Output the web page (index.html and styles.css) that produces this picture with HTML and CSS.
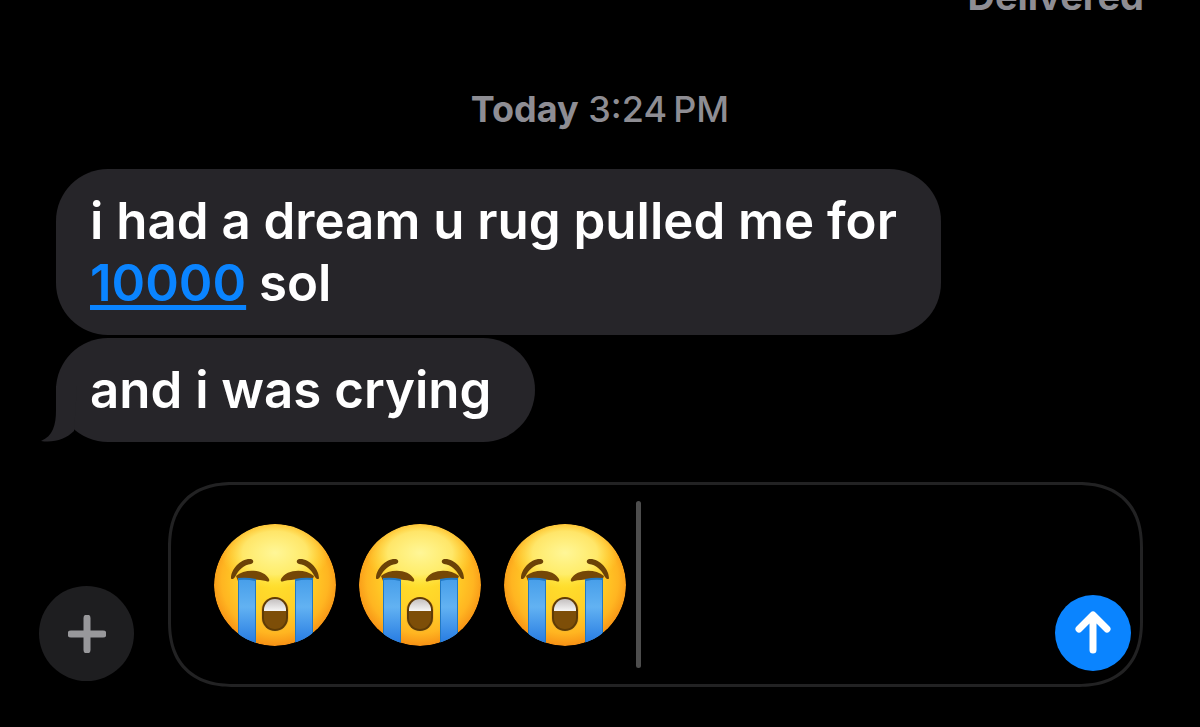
FILE: index.html
```
<!DOCTYPE html>
<html lang="en">
<head>
<meta charset="UTF-8" />
<meta name="viewport" content="width=device-width, initial-scale=1" />
<title>Messages</title>
<link rel="stylesheet" href="styles.css">
</head>
<body>

  <!-- shared emoji drawing -->
  <svg class="defs" aria-hidden="true">
    <defs>
      <radialGradient id="face" cx="0.5" cy="0.46" r="0.56">
        <stop offset="0" stop-color="#ffe02c" />
        <stop offset="0.5" stop-color="#ffd028" />
        <stop offset="0.78" stop-color="#ffb521" />
        <stop offset="1" stop-color="#f58a12" />
      </radialGradient>
      <radialGradient id="shine" cx="0.5" cy="0.4" r="0.5">
        <stop offset="0" stop-color="#fffaa4" stop-opacity="0.9" />
        <stop offset="0.6" stop-color="#fff380" stop-opacity="0.75" />
        <stop offset="1" stop-color="#ffe640" stop-opacity="0" />
      </radialGradient>
      <linearGradient id="tear" x1="0" y1="0" x2="0" y2="1">
        <stop offset="0" stop-color="#489fea" />
        <stop offset="0.4" stop-color="#62b2f2" />
        <stop offset="1" stop-color="#1f74e0" />
      </linearGradient>
      <linearGradient id="teeth" x1="0" y1="0" x2="0" y2="1">
        <stop offset="0" stop-color="#c4c0c0" />
        <stop offset="1" stop-color="#f6f6f6" />
      </linearGradient>
      <clipPath id="round"><circle cx="61" cy="61" r="61" /></clipPath>
      <clipPath id="mouth"><rect x="50" y="75" width="22" height="30" rx="11" /></clipPath>
    </defs>
    <symbol id="sob" viewBox="0 0 122 122">
      <g clip-path="url(#round)">
        <circle cx="61" cy="61" r="61" fill="url(#face)" />
        <ellipse cx="61" cy="36" rx="54" ry="36" fill="url(#shine)" />
        <path d="M17 54C17 45 27 34 37 35C40 36 40 39 37 40C30 41 25 45 21 53C20 55 17 56 17 54Z" fill="#6b4207" />
        <path d="M105 54C105 45 95 34 85 35C82 36 82 39 85 40C92 41 97 45 101 53C102 55 105 56 105 54Z" fill="#6b4207" />
        <path d="M22 52C31 44 50 45 55 55C56 58 54 58 52 57C43 55 32 55 24 57Z" fill="#754706" />
        <path d="M100 52C91 44 72 45 67 55C66 58 68 58 70 57C79 55 90 55 98 57Z" fill="#754706" />
        <path d="M24 54Q33 53 42 55V124H24Z" fill="#2279c4" />
        <path d="M25 56Q33 55 41 57V124H25Z" fill="url(#tear)" />
        <path d="M99 54Q90 53 81 55V124H99Z" fill="#2279c4" />
        <path d="M98 56Q90 55 82 57V124H98Z" fill="url(#tear)" />
        <rect x="47" y="73" width="28" height="35" rx="14" fill="#f7b62a" />
        <rect x="48" y="73" width="26" height="34" rx="13" fill="#5e3b06" />
        <g clip-path="url(#mouth)">
          <rect x="50" y="75" width="22" height="30" fill="#7d4e08" />
          <rect x="50" y="75" width="22" height="12" fill="url(#teeth)" />
        </g>
      </g>
    </symbol>
  </svg>

  <main class="thread">
    <p class="status">Delivered</p>
    <p class="timestamp"><b>Today</b> 3:24&#8201;PM</p>
    <div class="bubble">i had a dream u rug pulled me for <br><a href="#">10000</a> sol</div>
    <div class="bubble last">
      and i was crying
      <svg class="tail" viewBox="0 0 36 56" aria-hidden="true">
        <path d="M15 0V24C15 39 12 50 0 55C13 57 25 53 33 45L36 0Z" />
      </svg>
    </div>
  </main>

  <form class="composer">
    <button type="button" class="add-btn" aria-label="Add attachment">
      <svg viewBox="0 0 38 38" aria-hidden="true"><path d="M19 3V35M3 19H35" /></svg>
    </button>
    <div class="field">
      <div class="input" role="textbox" contenteditable="true" aria-label="Message">
        <svg class="emoji" role="img" aria-label="crying"><use href="#sob" /></svg>
        <svg class="emoji" role="img" aria-label="crying"><use href="#sob" /></svg>
        <svg class="emoji" role="img" aria-label="crying"><use href="#sob" /></svg>
        <span class="caret"></span>
      </div>
      <button type="button" class="send-btn" aria-label="Send">
        <svg viewBox="0 0 36 44" aria-hidden="true"><path d="M18 39V5M4 18L18 4L32 18" /></svg>
      </button>
    </div>
  </form>

</body>
</html>
```

FILE: styles.css
```
* {
  box-sizing: border-box;
}
body {
  margin: 0;
  height: 100vh;
  display: flex;
  flex-direction: column;
  overflow: hidden;
  background: #000;
  color: #fff;
  font-family: Inter, 'Liberation Sans', sans-serif;
}
p {
  margin: 0;
}
.defs {
  position: absolute;
  width: 0;
  height: 0;
}

/* conversation, pinned to the bottom */
.thread {
  flex: 1;
  min-height: 0;
  display: flex;
  flex-direction: column;
  justify-content: flex-end;
  align-items: flex-start;
  padding: 0 56px 40px;
}
.status,
.timestamp {
  color: #8e8d93;
  font-size: 36px;
  line-height: 44px;
}
.status {
  align-self: flex-end;
  font-size: 38px;
  font-weight: 700;
  margin-bottom: 69px;
}
.timestamp {
  align-self: center;
  font-weight: 500;
  margin-bottom: 38px;
}
.timestamp b {
  font-weight: 700;
}
.bubble {
  position: relative;
  padding: 21px 44px 21px 34px;
  border-radius: 52px;
  background: #262529;
  font-size: 51px;
  line-height: 62px;
  font-weight: 600;
}
.bubble.last {
  margin-top: 3px;
}
.bubble a {
  color: #0a84ff;
  text-decoration: underline;
  text-decoration-thickness: 5px;
  text-underline-offset: 4px;
}
.tail {
  position: absolute;
  left: -15px;
  bottom: 0;
  width: 36px;
  height: 56px;
  fill: #262529;
}

/* composer */
.composer {
  display: flex;
  align-items: flex-end;
  gap: 34px;
  padding: 0 57px 40px 39px;
}
button {
  display: flex;
  align-items: center;
  justify-content: center;
  flex: none;
  padding: 0;
  border: none;
  border-radius: 50%;
  cursor: pointer;
}
button svg {
  fill: none;
  stroke-linecap: round;
  stroke-linejoin: round;
}
.add-btn {
  width: 95px;
  height: 95px;
  margin-bottom: 6px;
  background: #1e1e20;
}
.add-btn svg {
  width: 38px;
  height: 38px;
  stroke: #98989b;
  stroke-width: 7;
}
.field {
  flex: 1;
  display: flex;
  align-items: flex-end;
  padding: 16px 9px 16px 43px;
  border: 3px solid #222223;
  border-radius: 66px;
  corner-shape: superellipse(1.25);
}
.input {
  flex: 1;
  display: flex;
  align-items: center;
  gap: 23px;
  outline: none;
}
.emoji {
  width: 122px;
  height: 122px;
}
.caret {
  width: 5px;
  height: 167px;
  margin-left: -13px;
  border-radius: 3px;
  background: #4d4d4d;
}
.send-btn {
  width: 76px;
  height: 76px;
  margin-bottom: -3px;
  background: #0a84ff;
}
.send-btn svg {
  width: 36px;
  height: 44px;
  stroke: #fff;
  stroke-width: 7;
}
```
